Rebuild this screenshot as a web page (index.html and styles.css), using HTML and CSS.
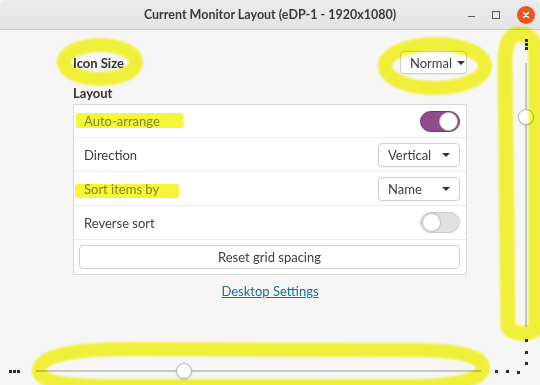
FILE: index.html
```html
<!DOCTYPE html>
<html lang="en">
<head>
  <meta charset="UTF-8" />
  <title>Current Monitor Layout</title>
  <link rel="stylesheet" href="styles.css">
</head>
<body>
  <div class="window">
    <header class="titlebar">
      <span class="title">Current Monitor Layout (eDP-1 - 1920x1080)</span>
      <div class="win-buttons">
        <span class="win-min"></span>
        <span class="win-max"></span>
        <span class="win-close">
          <svg width="10" height="10" viewBox="0 0 10 10"><path d="M2.5 2.5l5 5M7.5 2.5l-5 5" stroke="#fff" stroke-width="1.6" stroke-linecap="round"/></svg>
        </span>
      </div>
    </header>

    <div class="body">
      <main class="main">
        <div class="icon-size-row">
          <span class="strong">Icon Size</span>
          <div class="dropdown dropdown-compact">Normal <span class="caret"></span></div>
        </div>

        <h2 class="strong section-title">Layout</h2>

        <div class="list">
          <div class="row">
            <span>Auto-arrange</span>
            <span class="switch on"><span class="knob"></span></span>
          </div>
          <div class="row">
            <span>Direction</span>
            <div class="dropdown">Vertical <span class="caret"></span></div>
          </div>
          <div class="row">
            <span>Sort items by</span>
            <div class="dropdown">Name <span class="caret"></span></div>
          </div>
          <div class="row">
            <span>Reverse sort</span>
            <span class="switch"><span class="knob"></span></span>
          </div>
          <div class="row row-button">
            <button class="btn">Reset grid spacing</button>
          </div>
        </div>

        <a class="link" href="#">Desktop Settings</a>
      </main>

      <div class="vslider">
        <div class="dots dots-v"><i></i><i></i><i></i></div>
        <div class="vtrack"><span class="slider-knob vknob"></span></div>
        <div class="dots dots-v-wide"><i></i><i></i></div>
      </div>

      <div class="hslider">
        <div class="dots dots-h"><i></i><i></i><i></i></div>
        <div class="htrack"><span class="slider-knob hknob"></span></div>
        <div class="dots dots-h-wide"><i></i><i></i></div>
      </div>

      <div class="corner"><i class="c1"></i><i class="c2"></i></div>
    </div>

    <!-- hand-drawn highlighter marks on top of the screenshot -->
    <svg class="marker" width="540" height="385" viewBox="0 0 540 385">
      <g class="ring" fill="none" stroke="#f8f83c" stroke-linecap="round" stroke-linejoin="round">
        <ellipse cx="100" cy="62" rx="36" ry="17" stroke-width="14"/>
        <ellipse cx="435" cy="66" rx="50" ry="22" stroke-width="14"/>
        <path d="M505 62 Q505 34 520 34 Q536 34 536 58 L536 326 Q535 334 520 333 Q509 332 508 326 Z" stroke-width="15"/>
        <path d="M39 370 Q41 349 130 349 L420 350 Q483 351 483 368 Q482 384 420 386 L110 386 Q37 386 39 370 Z" stroke-width="14"/>
      </g>
      <g class="bar bar-ink" fill="#f5f53a">
        <rect x="76" y="113" width="107" height="15" rx="3"/>
        <rect x="75" y="184" width="104" height="14" rx="3"/>
      </g>
      <g class="bar bar-wash" fill="#f5f53a">
        <rect x="76" y="113" width="107" height="15" rx="3"/>
        <rect x="75" y="184" width="104" height="14" rx="3"/>
      </g>
    </svg>
  </div>
</body>
</html>
```

FILE: styles.css
```css
:root {
  --bg: #f6f6f6;
  --text: #3c3c3c;
  --border: #d6d6d6;
  --sep: #ebebeb;
  --purple: #8f4b8c;
  --link: #1e6e8e;
  --dot: #2e2e2e;
}

* {
  margin: 0;
  padding: 0;
  box-sizing: border-box;
}

body {
  font-family: Lato, "Noto Sans", sans-serif;
  font-size: 13px;
  color: var(--text);
  background: var(--bg);
}

.window {
  position: relative;
  width: 540px;
  height: 385px;
  display: flex;
  flex-direction: column;
  background: var(--bg);
  overflow: hidden;
}

/* title bar */
.titlebar {
  height: 30px;
  display: grid;
  grid-template-columns: 1fr auto 1fr;
  align-items: center;
  background: linear-gradient(#ebebeb, #e4e4e4);
  border-bottom: 1px solid #cdcdcd;
  border-radius: 6px 6px 0 0;
}

.title {
  grid-column: 2;
  font-weight: 700;
  font-size: 12.5px;
  color: #3a3a3a;
}

.win-buttons {
  grid-column: 3;
  justify-self: end;
  display: flex;
  align-items: center;
  gap: 17px;
  padding-right: 5px;
}

.win-min {
  width: 7px;
  height: 1px;
  margin-top: 3px;
  background: #5a5a5a;
}

.win-max {
  width: 8px;
  height: 8px;
  border: 1px solid #5a5a5a;
}

.win-close {
  width: 18px;
  height: 18px;
  border-radius: 50%;
  background: #e9541f;
  display: flex;
  align-items: center;
  justify-content: center;
}

/* body grid */
.body {
  flex: 1;
  display: grid;
  grid-template-columns: 1fr 28px;
  grid-template-rows: 1fr 28px;
}

.main {
  padding: 21px 45px 0 73px;
  display: flex;
  flex-direction: column;
}

.strong {
  font-weight: 700;
  font-size: 13px;
  color: #333;
}

.icon-size-row {
  display: flex;
  justify-content: space-between;
  align-items: center;
  height: 23px;
}

.section-title {
  margin-top: 10px;
  height: 19px;
  line-height: 19px;
}

.dropdown {
  width: 82px;
  height: 24px;
  padding: 0 9px;
  display: flex;
  align-items: center;
  justify-content: space-between;
  background: #fff;
  border: 1px solid #cfcfcf;
  border-radius: 4px;
  box-shadow: 0 1px 1px rgba(0, 0, 0, 0.05);
}

.dropdown-compact {
  width: 67px;
  height: 23px;
  gap: 5px;
  justify-content: flex-start;
}

.caret {
  width: 0;
  height: 0;
  border-left: 4px solid transparent;
  border-right: 4px solid transparent;
  border-top: 4px solid #333;
}

/* list */
.list {
  margin-top: 1px;
  background: #fff;
  border: 1px solid var(--border);
}

.row {
  height: 34px;
  padding: 0 6px 0 10px;
  display: flex;
  align-items: center;
  justify-content: space-between;
  border-bottom: 1px solid var(--sep);
}

.row:first-child {
  height: 33px;
}

.row-button {
  border-bottom: none;
  padding: 0 6px 0 5px;
}

.btn {
  width: 100%;
  height: 24px;
  font: inherit;
  color: var(--text);
  background: #fff;
  border: 1px solid #cfcfcf;
  border-radius: 4px;
}

.switch {
  width: 40px;
  height: 21px;
  border-radius: 11px;
  background: #e0e0e0;
  border: 1px solid #cdcdcd;
  display: flex;
  align-items: center;
  padding: 0 1px;
}

.switch .knob {
  width: 19px;
  height: 19px;
  border-radius: 50%;
  background: #fff;
  border: 1px solid #bdbdbd;
}

.switch.on {
  background: var(--purple);
  border-color: #6f3a6c;
  justify-content: flex-end;
}

.link {
  align-self: center;
  margin-top: 8px;
  color: var(--link);
  text-decoration: underline;
}

/* sliders */
.dots {
  display: flex;
  gap: 1px;
}

.dots i,
.corner i {
  display: block;
  width: 3px;
  height: 3px;
  background: var(--dot);
}

.vslider {
  display: flex;
  flex-direction: column;
  align-items: center;
  padding-top: 9px;
}

.dots-v {
  flex-direction: column;
}

.vtrack {
  position: relative;
  margin-top: 13px;
  width: 2px;
  height: 264px;
  background: #c6c6c6;
}

.dots-v-wide {
  flex-direction: column;
  gap: 9px;
  margin-top: 12px;
}

.hslider {
  display: flex;
  align-items: center;
  padding-left: 9px;
}

.htrack {
  position: relative;
  margin-left: 16px;
  width: 445px;
  height: 2px;
  background: #c6c6c6;
}

.dots-h-wide {
  gap: 8px;
  margin-left: 14px;
}

.slider-knob {
  position: absolute;
  width: 16px;
  height: 16px;
  border-radius: 50%;
  background: #fff;
  border: 1px solid #b5b5b5;
  box-shadow: 0 1px 2px rgba(0, 0, 0, 0.12);
}

.hknob {
  left: 140px;
  top: -7px;
}

.vknob {
  top: 46px;
  left: -7px;
}

.corner {
  display: grid;
  grid-template-columns: 3px 3px;
  grid-template-rows: 3px 3px;
  column-gap: 5px;
  row-gap: 6px;
  padding: 5px 0 0 5px;
}

.corner .c1 {
  grid-column: 2;
  grid-row: 1;
}

.corner .c2 {
  grid-column: 1;
  grid-row: 2;
}

/* highlighter overlay */
.marker {
  position: absolute;
  top: 0;
  left: 0;
  pointer-events: none;
}

.marker .ring {
  mix-blend-mode: multiply;
  filter: blur(0.8px);
}

.marker .bar {
  filter: blur(0.6px);
}

.marker .bar-ink {
  mix-blend-mode: multiply;
}

.marker .bar-wash {
  opacity: 0.4;
}
```
